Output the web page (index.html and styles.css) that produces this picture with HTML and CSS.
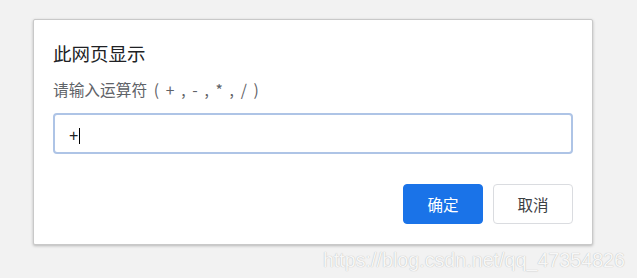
FILE: index.html
```html
<!DOCTYPE html>
<html lang="zh-CN">
<head>
<meta charset="utf-8">
<title>此网页显示</title>
<link rel="stylesheet" href="styles.css">
</head>
<body>
<div class="page">
  <div class="dialog">
    <div class="title">此网页显示</div>
    <div class="message">请输入运算符<span class="ops"> ( + , - , * , / )</span></div>
    <div class="field"><span class="value">+</span><span class="caret"></span></div>
    <div class="actions">
      <button class="btn primary">确定</button>
      <button class="btn secondary">取消</button>
    </div>
  </div>
  <div class="watermark">https://blog.csdn.net/qq_47354826</div>
</div>
</body>
</html>
```
FILE: styles.css
```css
html, body {
  margin: 0;
  padding: 0;
  background: #f2f2f2;
}
body {
  width: 637px;
  height: 278px;
  overflow: hidden;
  font-family: "Noto Sans CJK SC", "Noto Sans", sans-serif;
}
.page {
  padding: 19px 0 0 33px;
  display: flex;
  flex-direction: column;
}
.dialog {
  box-sizing: border-box;
  width: 560px;
  height: 226px;
  background: #fff;
  border: 1px solid #c9c9c9;
  border-radius: 2px;
  box-shadow: 0 1px 3px rgba(0, 0, 0, 0.25);
  padding: 21px 19px 0 19px;
  display: flex;
  flex-direction: column;
}
.title {
  font-size: 18.5px;
  line-height: 24px;
  color: #202124;
}
.message {
  margin-top: 15px;
  font-size: 15.7px;
  line-height: 20px;
  color: #5f6368;
  white-space: pre;
}
.ops {
  word-spacing: 3.2px;
}
.field {
  margin-top: 13px;
  box-sizing: border-box;
  height: 41px;
  border: 2px solid #aec4e6;
  border-radius: 4px;
  display: flex;
  align-items: center;
  padding: 4px 0 0 14px;
}
.value {
  font-family: "Liberation Sans", Arial, sans-serif;
  font-size: 16px;
  color: #202124;
}
.caret {
  width: 1px;
  height: 16px;
  background: #000;
  margin-left: 1px;
}
.actions {
  margin-top: 30px;
  display: flex;
  justify-content: flex-end;
  gap: 10px;
}
.btn {
  box-sizing: border-box;
  width: 80px;
  height: 40px;
  border-radius: 4px;
  font-family: "Noto Sans CJK SC", "Noto Sans", sans-serif;
  font-size: 15.5px;
  padding: 0;
}
.primary {
  background: #1a73e8;
  border: 1px solid #1a73e8;
  color: #fff;
}
.secondary {
  background: #fff;
  border: 1px solid #dadce0;
  color: #3c4043;
}
.watermark {
  align-self: flex-end;
  margin: 3px 12px 0 0;
  font-family: "Liberation Sans", Arial, sans-serif;
  font-size: 19.7px;
  line-height: 24px;
  color: #f7f7f7;
  text-shadow: 0 0 1px rgba(0, 0, 0, 0.3);
}
```
